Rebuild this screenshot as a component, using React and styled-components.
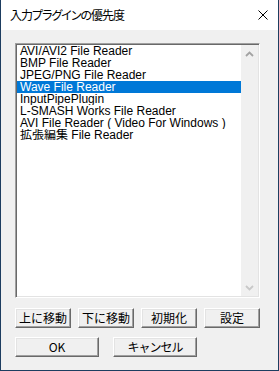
import React from "react";
import styled, { createGlobalStyle } from "styled-components";

const Global = createGlobalStyle`
  html, body { margin: 0; padding: 0; background: #f0f0f0; }
  * { box-sizing: border-box; }
  body {
    font-family: "Liberation Sans", "Noto Sans CJK JP", sans-serif;
    font-size: 12px;
    font-feature-settings: "palt";
  }
`;

const Window = styled.div`
  width: 279px;
  height: 371px;
  display: flex;
  flex-direction: column;
  border: 1px solid #1d3d60;
  border-top: none;
  background: #f0f0f0;
`;

const TitleBar = styled.div`
  height: 30px;
  background: #ffffff;
  display: flex;
  align-items: center;
  justify-content: space-between;
  padding: 0 10px 0 9px;
`;

const Title = styled.div`
  font-family: "Noto Sans CJK JP", sans-serif;
  font-size: 12px;
  color: #000;
  letter-spacing: -1px;
  line-height: 1;
`;

const Close = styled.svg`
  width: 10px;
  height: 10px;
  display: block;
`;

const Client = styled.div`
  flex: 1;
  display: flex;
  flex-direction: column;
  padding: 13px 18px 0 14px;
`;

const ListBox = styled.div`
  width: 245px;
  height: 255px;
  display: flex;
  background: #fff;
  border-top: 1px solid #a0a0a0;
  border-left: 1px solid #a0a0a0;
  border-right: 1px solid #ffffff;
  border-bottom: 1px solid #ffffff;
  box-shadow: inset 1px 1px 0 #696969, inset -1px -1px 0 #e3e3e3;
  padding: 1px;
`;

const Items = styled.div`
  flex: 1;
  display: flex;
  flex-direction: column;
`;

const Item = styled.div`
  height: 12px;
  line-height: 12px;
  padding-left: 3px;
  white-space: nowrap;
  overflow: hidden;
  font-size: 12px;
  color: ${(p) => (p.$selected ? "#fff" : "#000")};
  background: ${(p) => (p.$selected ? "#0078d7" : "transparent")};
`;

const ScrollBar = styled.div`
  width: 17px;
  background: #f0f0f0;
  display: flex;
  flex-direction: column;
  justify-content: space-between;
  align-items: center;
  padding: 6px 0 5px;
`;

const Chevron = styled.svg`
  width: 9px;
  height: 6px;
  display: block;
`;

const Row = styled.div`
  display: flex;
  gap: ${(p) => p.$gap}px;
  margin-top: ${(p) => p.$top}px;
`;

const Button = styled.button`
  width: ${(p) => p.$w}px;
  height: 20px;
  padding: 0;
  margin: 0;
  background: #f0f0f0;
  font-family: "Noto Sans CJK JP", sans-serif;
  font-size: 12px;
  color: #000;
  line-height: 1;
  border-top: 1px solid #ffffff;
  border-left: 1px solid #ffffff;
  border-right: 1px solid #696969;
  border-bottom: 1px solid #696969;
  box-shadow: inset -1px -1px 0 #a0a0a0, inset 1px 1px 0 #e3e3e3;
  display: flex;
  align-items: center;
  justify-content: center;
  letter-spacing: ${(p) => p.$ls || 0}px;
`;

const items = [
  "AVI/AVI2 File Reader",
  "BMP File Reader",
  "JPEG/PNG File Reader",
  "Wave File Reader",
  "InputPipePlugin",
  "L-SMASH Works File Reader",
  "AVI File Reader ( Video For Windows )",
  "拡張編集 File Reader",
];

export default function App() {
  return (
    <>
      <Global />
      <Window>
        <TitleBar>
          <Title>入力プラグインの優先度</Title>
          <Close viewBox="0 0 10 10">
            <path d="M0.5 0.5 L9.5 9.5 M9.5 0.5 L0.5 9.5" stroke="#000" strokeWidth="1" fill="none" />
          </Close>
        </TitleBar>
        <Client>
          <ListBox>
            <Items>
              {items.map((t, i) => (
                <Item key={t} $selected={i === 3}>
                  {t}
                </Item>
              ))}
            </Items>
            <ScrollBar>
              <Chevron viewBox="0 0 9 6">
                <path d="M1 5 L4.5 1.5 L8 5" stroke="#a3a3a3" strokeWidth="1.8" fill="none" />
              </Chevron>
              <Chevron viewBox="0 0 9 6">
                <path d="M1 1 L4.5 4.5 L8 1" stroke="#c8c8c8" strokeWidth="1.8" fill="none" />
              </Chevron>
            </ScrollBar>
          </ListBox>
          <Row $gap={7} $top={10}>
            <Button $w={56}>上に移動</Button>
            <Button $w={56}>下に移動</Button>
            <Button $w={56}>初期化</Button>
            <Button $w={56}>設定</Button>
          </Row>
          <Row $gap={14} $top={9}>
            <Button $w={84}>OK</Button>
            <Button $w={84} $ls={-1}>キャンセル</Button>
          </Row>
        </Client>
      </Window>
    </>
  );
}
